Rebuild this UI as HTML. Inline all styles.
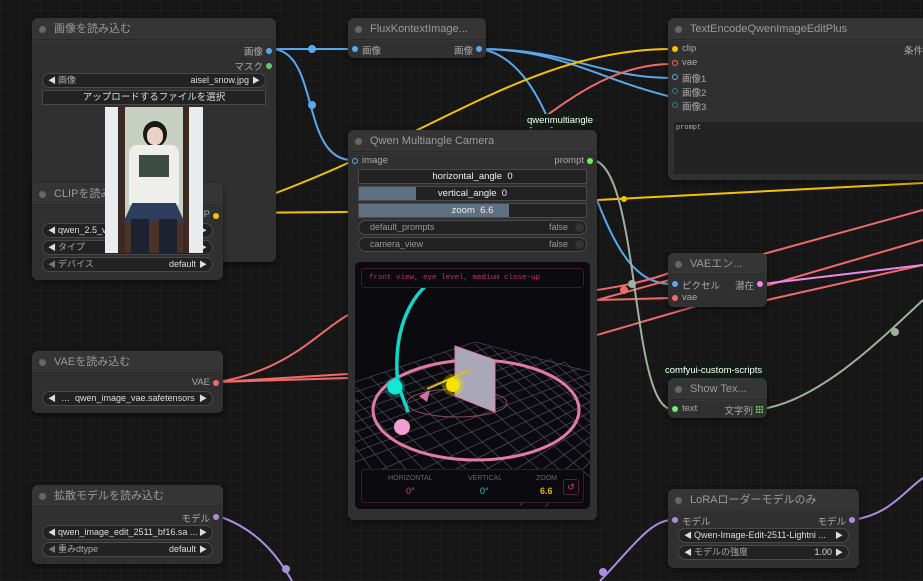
<!DOCTYPE html>
<html><head><meta charset="utf-8"><style>
*{box-sizing:border-box;margin:0;padding:0}
body{width:923px;height:581px;overflow:hidden;background:#161616;font-family:"Liberation Sans","Noto Sans CJK JP",sans-serif;position:relative;
background-image:linear-gradient(#1d1d1d 1px,transparent 1px),linear-gradient(90deg,#1d1d1d 1px,transparent 1px);background-size:10px 10px}
.n{position:absolute;background:#353535;border-radius:6px;box-shadow:0 2px 6px rgba(0,0,0,.5);overflow:hidden}
.t{height:22px;border-bottom:1px solid #2a2a2a;color:#9a9a9a;font-size:11px;line-height:22px;padding-left:22px;position:relative;white-space:nowrap}
.t:before{content:"";position:absolute;left:7px;top:8px;width:7px;height:7px;border-radius:50%;background:#666}
.b{position:absolute;background:#303030;left:0;right:0;top:23px;bottom:0}
.l{position:absolute;font-size:9.5px;color:#aaa;white-space:nowrap}
.d{position:absolute;width:6px;height:6px;border-radius:50%}
.w{position:absolute;height:15px;border:1px solid #4a4a4a;background:#222;border-radius:8px;font-size:9px;color:#ddd;line-height:13px;white-space:nowrap;overflow:hidden}
.w .a{position:absolute;left:5px;color:#ddd;font-size:8px}
.w .r{position:absolute;right:5px;color:#ddd;font-size:8px;top:0}
.w .k{position:absolute;left:15px;color:#aaa}
.w .v{position:absolute;right:16px}
.lab{position:absolute;background:#0f1d12;color:#fff;font-size:9.5px;padding:1px 3px;white-space:nowrap}
</style></head><body>
<svg width="923" height="581" style="position:absolute;left:0;top:0" fill="none" stroke-width="2">
<g stroke="#5aa9ec">
<path d="M271,49 L348,49"/>
<path d="M271,49 C320,49 300,160 352,160"/>
<path d="M480,49 C570,49 600,78 672,78"/>
<path d="M480,49 C560,49 600,80 672,97"/>
<path d="M480,49 C520,55 540,100 552,128"/>
<path d="M597,200 C620,260 640,284 672,284"/>
</g>
<g stroke="#f5c400">
<path d="M218,213 C420,150 520,49 672,49"/>
<path d="M218,213 L348,212"/>
<path d="M597,200 L923,183"/>
</g>
<g stroke="#f06a6a">
<path d="M218,382 C290,370 320,330 348,315"/>
<path d="M218,382 L348,378"/>
<path d="M218,382 L348,374"/>
<path d="M530,128 C580,90 620,64 672,64"/>
<path d="M597,290 C630,285 650,280 672,272"/>
<path d="M597,300 L672,298"/>
<path d="M597,335 L923,240"/>
<path d="M597,300 L923,210"/>
<path d="M767,300 L923,265"/>
</g>
<path d="M591,160 C640,160 630,409 672,409" stroke="#a0b0a0"/>
<path d="M762,409 C820,400 880,340 923,300" stroke="#a0b0a0"/>
<path d="M762,284 L923,265" stroke="#e88ae8"/>
<g stroke="#a88ee0">
<path d="M218,516 C260,530 280,560 292,581"/>
<path d="M600,581 C630,550 650,520 672,520"/>
<path d="M852,520 C890,515 905,490 923,478"/>
</g>
<circle cx="312" cy="49" r="4" fill="#5aa9ec"/><circle cx="312" cy="105" r="4" fill="#5aa9ec"/>
<circle cx="632" cy="284" r="4" fill="#a0b0a0"/><circle cx="624" cy="290" r="4" fill="#f06a6a"/>
<circle cx="895" cy="332" r="4" fill="#a0b0a0"/><circle cx="286" cy="569" r="4" fill="#a88ee0"/><circle cx="603" cy="572" r="4" fill="#a88ee0"/>
<circle cx="624" cy="199" r="3" fill="#f5c400"/>
</svg>

<div class="n" style="left:32px;top:18px;width:244px;height:244px"><div class="t">画像を読み込む</div><div class="b"></div>
<div class="l" style="right:13px;top:26px">画像</div><div class="d" style="right:4px;top:30px;background:#5aa9ec"></div>
<div class="l" style="right:13px;top:41px">マスク</div><div class="d" style="right:4px;top:45px;background:#6cc46c"></div>
<div class="w" style="left:10px;right:10px;top:55px"><span class="a">◀</span><span class="k">画像</span><span class="v">aisel_snow.jpg</span><span class="r">▶</span></div>
<div style="position:absolute;left:10px;right:10px;top:72px;height:15px;border:1px solid #4a4a4a;background:#222;color:#ddd;font-size:9.5px;text-align:center;line-height:13px">アップロードするファイルを選択</div>
</div>
<div class="n" style="left:32px;top:183px;width:191px;height:97px"><div class="t">CLIPを読み込む</div><div class="b"></div>
<div class="l" style="right:13px;top:26px">CLIP</div><div class="d" style="right:4px;top:30px;background:#f5c400"></div>
<div class="w" style="left:10px;right:10px;top:40px"><span class="a">◀</span><span class="k" style="color:#ddd">qwen_2.5_vl_7b.safetensors</span><span class="r">▶</span></div>
<div class="w" style="left:10px;right:10px;top:57px"><span class="a">◀</span><span class="k">タイプ</span><span class="r">▶</span></div>
<div class="w" style="left:10px;right:10px;top:74px"><span class="a" style="color:#777">◀</span><span class="k">デバイス</span><span class="v">default</span><span class="r">▶</span></div>
</div>
<div style="position:absolute;left:105px;top:107px;width:98px;height:146px;background:linear-gradient(90deg,#e8ecef 0 13px,#3a2a22 13px 20px,#c8d0c4 20px 78px,#3a2a22 78px 84px,#e8ecef 84px)">
<div style="position:absolute;left:38px;top:14px;width:24px;height:26px;border-radius:50%;background:#1a1716"></div>
<div style="position:absolute;left:42px;top:20px;width:16px;height:18px;border-radius:45%;background:#e9d3c4"></div>
<div style="position:absolute;left:24px;top:38px;width:50px;height:60px;border-radius:8px 8px 0 0;background:#eeeeea"></div>
<div style="position:absolute;left:34px;top:48px;width:30px;height:22px;background:#3d4c45"></div>
<div style="position:absolute;left:18px;top:96px;width:62px;height:20px;background:#2d3e5c;clip-path:polygon(15% 0,85% 0,100% 100%,0 100%)"></div>
<div style="position:absolute;left:20px;top:114px;width:58px;height:32px;background:#4a3326"></div>
<div style="position:absolute;left:26px;top:112px;width:18px;height:34px;background:#1c2230"></div>
<div style="position:absolute;left:54px;top:112px;width:18px;height:34px;background:#1c2230"></div>
</div>
<div class="n" style="left:348px;top:18px;width:138px;height:40px"><div class="t">FluxKontextImage...</div><div class="b"></div>
<div class="d" style="left:4px;top:28px;background:#5aa9ec"></div><div class="l" style="left:14px;top:25px">画像</div>
<div class="l" style="right:13px;top:25px">画像</div><div class="d" style="right:4px;top:28px;background:#5aa9ec"></div>
</div>
<div class="n" style="left:668px;top:18px;width:270px;height:162px"><div class="t">TextEncodeQwenImageEditPlus</div><div class="b"></div>
<div class="d" style="left:4px;top:28px;background:#f5c400"></div><div class="l" style="left:14px;top:25px">clip</div>
<div class="d" style="left:4px;top:42px;border:1.5px solid #f06a6a"></div><div class="l" style="left:14px;top:39px">vae</div>
<div class="d" style="left:4px;top:56px;border:1.5px solid #5aa9ec"></div><div class="l" style="left:14px;top:53px">画像1</div>
<div class="d" style="left:4px;top:70px;border:1.5px solid #2c8090"></div><div class="l" style="left:14px;top:67px">画像2</div>
<div class="d" style="left:4px;top:84px;border:1.5px solid #2c8090"></div><div class="l" style="left:14px;top:81px">画像3</div>
<div class="l" style="left:236px;top:25px">条件付け</div>
<div style="position:absolute;left:6px;right:0;top:104px;height:52px;background:#222;font-family:'Liberation Mono',monospace;font-size:7px;color:#aaa;padding:2px">prompt</div>
</div>
<div class="lab" style="left:524px;top:114px">qwenmultiangle</div>
<div class="n" style="left:348px;top:130px;width:249px;height:390px"><div class="t">Qwen Multiangle Camera</div><div class="b"></div>
<div class="d" style="left:4px;top:28px;border:1.5px solid #5aa9ec"></div><div class="l" style="left:14px;top:25px">image</div>
<div class="l" style="right:13px;top:25px">prompt</div><div class="d" style="right:4px;top:28px;background:#6cf06c"></div>
<div style="position:absolute;left:10px;right:10px;top:39px;height:15px;background:#222;border:1px solid #4a4a4a;color:#eee;font-size:9.5px;text-align:center;line-height:13px">horizontal_angle&nbsp; 0</div>
<div style="position:absolute;left:10px;right:10px;top:56px;height:15px;background:linear-gradient(90deg,#5e7082 0 57px,#222 57px);border:1px solid #4a4a4a;color:#eee;font-size:9.5px;text-align:center;line-height:13px">vertical_angle&nbsp; 0</div>
<div style="position:absolute;left:10px;right:10px;top:73px;height:15px;background:linear-gradient(90deg,#5e7082 0 150px,#222 150px);border:1px solid #4a4a4a;color:#eee;font-size:9.5px;text-align:center;line-height:13px">zoom&nbsp; 6.6</div>
<div class="w" style="left:10px;right:10px;top:90px;color:#999"><span style="position:absolute;left:11px">default_prompts</span><span style="position:absolute;right:18px">false</span><span style="position:absolute;right:2px;top:2px;width:9px;height:9px;border-radius:50%;background:#333"></span></div>
<div class="w" style="left:10px;right:10px;top:107px;color:#999"><span style="position:absolute;left:11px">camera_view</span><span style="position:absolute;right:18px">false</span><span style="position:absolute;right:2px;top:2px;width:9px;height:9px;border-radius:50%;background:#333"></span></div>
<div style="position:absolute;left:7px;top:132px;width:235px;height:247px;background:#0b0a0f;border-radius:5px;overflow:hidden">
<svg width="235" height="247" style="position:absolute;left:0;top:0" fill="none">
<g stroke="#4a4556" stroke-width="0.8">
<path d="M0,120 L120,80 L235,110 M0,140 L150,90 M0,160 L180,95 M0,180 L210,100 M0,200 L235,112 M40,220 L235,130 M90,230 L235,150 M140,240 L235,175 M190,245 L235,200 M0,130 L135,85 M0,150 L165,92 M0,170 L195,98 M0,190 L225,106 M20,210 L235,121 M65,225 L235,140 M115,235 L235,162 M165,243 L235,188"/>
<path d="M0,125 L120,235 M30,110 L170,240 M60,100 L210,230 M90,90 L235,215 M120,82 L235,185 M150,88 L235,160 M180,94 L235,140 M210,100 L235,125 M0,150 L80,240 M0,185 L40,240 M15,115 L145,240 M45,105 L190,237 M75,95 L225,225 M105,86 L235,200 M135,85 L235,172 M165,91 L235,150 M195,97 L235,132 M0,137 L100,240 M0,168 L60,240"/>
</g>
<ellipse cx="121" cy="148" rx="103" ry="50" stroke="#e07aa8" stroke-width="3"/>
<ellipse cx="102" cy="141" rx="50" ry="14" stroke="#8a4a60" stroke-width="1"/>
<path d="M96,10 C60,20 40,60 42,110 C42,125 50,140 53,150" stroke="#10d8c8" stroke-width="3.5"/>
<path d="M100,84 L140,98 L140,150 L100,134 Z" fill="#a8a8b8" stroke="#e07aa8"/>
<path d="M72,127 L115,108" stroke="#e0c000" stroke-width="2"/>
<path d="M64,134 L75,128 L72,140 Z" fill="#d070a0"/>
<circle cx="98" cy="123" r="11" fill="rgba(240,220,0,.3)"/><circle cx="98" cy="123" r="7" fill="#f5e000"/>
<circle cx="40" cy="125" r="10" fill="rgba(16,216,200,.3)"/><circle cx="40" cy="125" r="7.5" fill="#10e8d8"/>
<circle cx="47" cy="165" r="8" fill="#f0a0d0"/>
</svg>
<div style="position:absolute;left:6px;top:6px;right:6px;height:20px;border:1px solid #3a1c2c;border-radius:3px;font-family:'Liberation Mono',monospace;font-size:7.5px;color:#c0306a;line-height:18px;padding-left:7px;background:#0b0a0f">front view, eye level, medium close-up</div>
<div style="position:absolute;left:6px;bottom:6px;right:6px;height:34px;border:1px solid #3a1c2c;border-radius:3px;background:#0b0a0f;font-size:7px;color:#666">
<span style="position:absolute;left:26px;top:5px">HORIZONTAL</span><span style="position:absolute;left:44px;top:16px;color:#e0407a;font-size:9px">0°</span>
<span style="position:absolute;left:106px;top:5px">VERTICAL</span><span style="position:absolute;left:118px;top:16px;color:#10d8c8;font-size:9px">0°</span>
<span style="position:absolute;left:174px;top:5px">ZOOM</span><span style="position:absolute;left:178px;top:16px;color:#f0b000;font-size:9px;font-weight:bold">6.6</span>
<span style="position:absolute;right:4px;top:9px;width:16px;height:16px;border:1px solid #5a2038;border-radius:3px;color:#e0407a;font-size:9px;text-align:center;line-height:14px">↺</span></div>
</div>
</div>
<div class="n" style="left:668px;top:253px;width:99px;height:54px"><div class="t">VAEエン...</div><div class="b"></div>
<div class="d" style="left:4px;top:28px;background:#5aa9ec"></div><div class="l" style="left:14px;top:25px">ピクセル</div>
<div class="d" style="left:4px;top:42px;background:#f06a6a"></div><div class="l" style="left:14px;top:39px">vae</div>
<div class="l" style="right:13px;top:25px">潜在</div><div class="d" style="right:4px;top:28px;background:#e88ae8"></div>
</div>
<div class="lab" style="left:662px;top:364px">comfyui-custom-scripts</div>
<div class="n" style="left:668px;top:378px;width:99px;height:40px"><div class="t">Show Tex...</div><div class="b"></div>
<div class="d" style="left:4px;top:28px;background:#6cf06c"></div><div class="l" style="left:14px;top:25px">text</div>
<div class="l" style="right:14px;top:25px">文字列</div>
<svg width="7" height="7" style="position:absolute;right:4px;top:28px"><g fill="#6cf06c"><rect x="0" y="0" width="1.6" height="1.6"/><rect x="2.7" y="0" width="1.6" height="1.6"/><rect x="5.4" y="0" width="1.6" height="1.6"/><rect x="0" y="2.7" width="1.6" height="1.6"/><rect x="2.7" y="2.7" width="1.6" height="1.6"/><rect x="5.4" y="2.7" width="1.6" height="1.6"/><rect x="0" y="5.4" width="1.6" height="1.6"/><rect x="2.7" y="5.4" width="1.6" height="1.6"/><rect x="5.4" y="5.4" width="1.6" height="1.6"/></g></svg>
</div>
<div class="n" style="left:32px;top:351px;width:191px;height:62px"><div class="t">VAEを読み込む</div><div class="b"></div>
<div class="l" style="right:13px;top:26px">VAE</div><div class="d" style="right:4px;top:29px;background:#f06a6a"></div>
<div class="w" style="left:10px;right:10px;top:40px"><span class="a">◀</span><span class="k" style="color:#ddd;left:18px">…&nbsp; qwen_image_vae.safetensors</span><span class="r">▶</span></div>
</div>
<div class="n" style="left:32px;top:485px;width:191px;height:79px"><div class="t">拡散モデルを読み込む</div><div class="b"></div>
<div class="l" style="right:13px;top:26px">モデル</div><div class="d" style="right:4px;top:29px;background:#a88ee0"></div>
<div class="w" style="left:10px;right:10px;top:40px"><span class="a">◀</span><span class="k" style="color:#ddd">qwen_image_edit_2511_bf16.sa ...</span><span class="r">▶</span></div>
<div class="w" style="left:10px;right:10px;top:57px"><span class="a" style="color:#777">◀</span><span class="k">重みdtype</span><span class="v">default</span><span class="r">▶</span></div>
</div>
<div class="n" style="left:668px;top:489px;width:191px;height:79px"><div class="t">LoRAローダーモデルのみ</div><div class="b"></div>
<div class="d" style="left:4px;top:28px;background:#a88ee0"></div><div class="l" style="left:14px;top:25px">モデル</div>
<div class="l" style="right:13px;top:25px">モデル</div><div class="d" style="right:4px;top:28px;background:#a88ee0"></div>
<div class="w" style="left:10px;right:10px;top:39px"><span class="a">◀</span><span class="k" style="color:#ddd">Qwen-Image-Edit-2511-Lightni ...</span><span class="r">▶</span></div>
<div class="w" style="left:10px;right:10px;top:56px"><span class="a">◀</span><span class="k">モデルの強度</span><span class="v">1.00</span><span class="r">▶</span></div>
</div>
</body></html>
